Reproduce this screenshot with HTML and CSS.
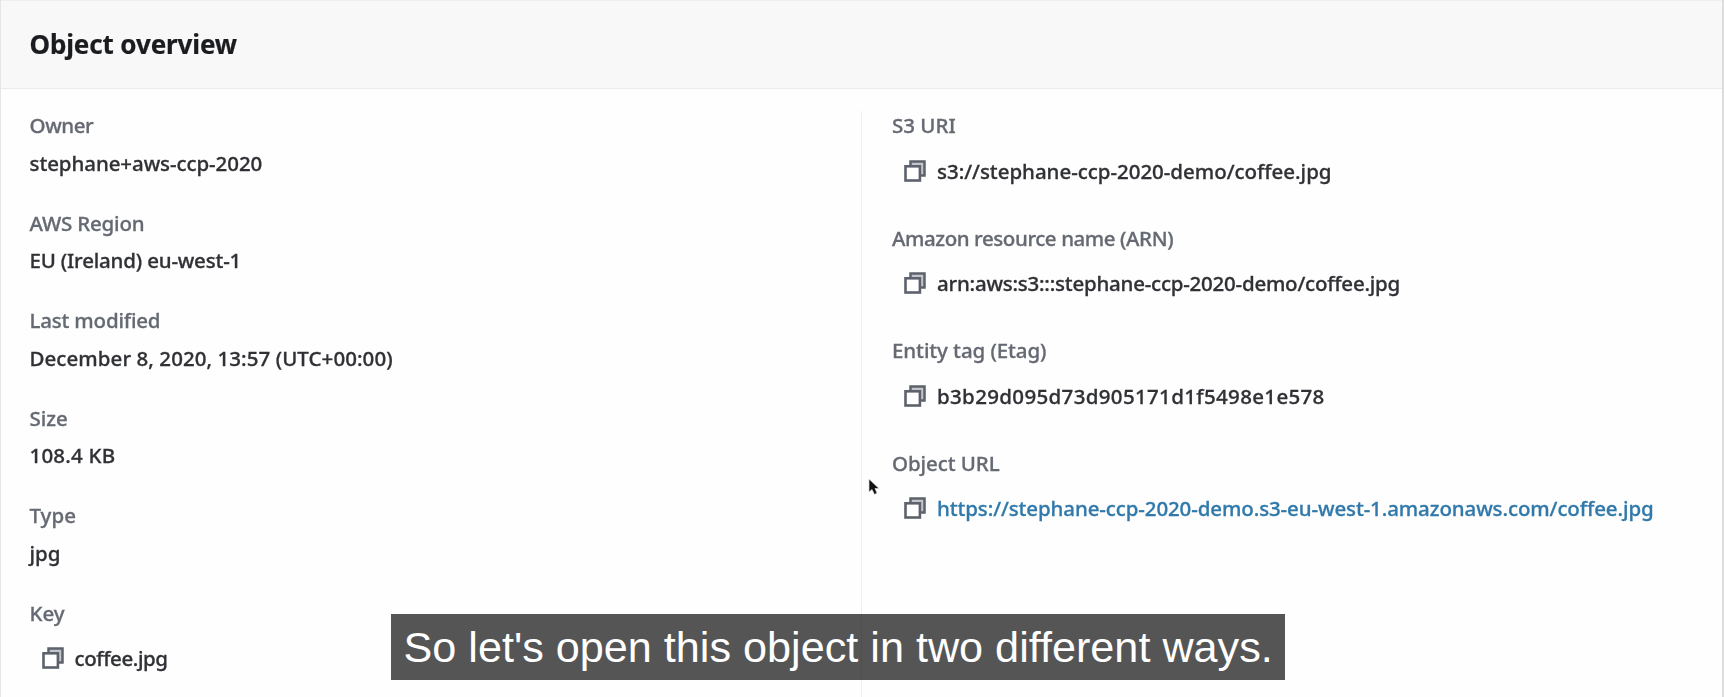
FILE: index.html
```html
<!DOCTYPE html>
<html lang="en">
<head>
<meta charset="utf-8">
<title>Object overview</title>
<link rel="stylesheet" href="styles.css">
</head>
<body>
<svg class="defs" aria-hidden="true">
  <symbol id="copy" viewBox="0 0 22 22">
    <path d="M6.500 5.500V1.500H20.500V15.500H16" fill="#c3c5cb" stroke="#5c616b" stroke-width="2.500"/>
    <rect x="1.500" y="6.300" width="14.400" height="14.200" fill="#fff" stroke="#5c616b" stroke-width="2.600"/>
  </symbol>
</svg>
<main class="panel">
  <header class="head"><h1>Object overview</h1></header>
  <div class="columns">
    <dl class="col left">
      <div class="item"><dt class="tight-l">Owner</dt><dd class="tight-s">stephane+aws-ccp-2020</dd></div>
      <div class="item"><dt class="tight-m">AWS Region</dt><dd class="tight-m">EU (Ireland) eu-west-1</dd></div>
      <div class="item"><dt class="tight-m">Last modified</dt><dd class="loose-s">December 8, 2020, 13:57 (UTC+00:00)</dd></div>
      <div class="item"><dt>Size</dt><dd class="loose-m">108.4 KB</dd></div>
      <div class="item"><dt>Type</dt><dd>jpg</dd></div>
      <div class="item"><dt>Key</dt><dd class="copyable tight-l"><svg class="icon"><use href="#copy"/></svg>coffee.jpg</dd></div>
    </dl>
    <dl class="col right">
      <div class="item"><dt>S3 URI</dt><dd class="copyable tight-xs"><svg class="icon"><use href="#copy"/></svg>s3://stephane-ccp-2020-demo/coffee.jpg</dd></div>
      <div class="item"><dt class="tight-l">Amazon resource name (ARN)</dt><dd class="copyable tight-ml"><svg class="icon"><use href="#copy"/></svg>arn:aws:s3:::stephane-ccp-2020-demo/coffee.jpg</dd></div>
      <div class="item"><dt class="tight-s">Entity tag (Etag)</dt><dd class="copyable loose-l"><svg class="icon"><use href="#copy"/></svg>b3b29d095d73d905171d1f5498e1e578</dd></div>
      <div class="item"><dt class="tight-s">Object URL</dt><dd class="copyable tight-url"><svg class="icon"><use href="#copy"/></svg><a href="#">https://stephane-ccp-2020-demo.s3-eu-west-1.amazonaws.com/coffee.jpg</a></dd></div>
    </dl>
  </div>
</main>
<svg class="cursor" viewBox="0 0 12 18"><path d="M1 1V14L4 11.500L6.500 16.500L9 15L7 10.500H11Z" fill="#111" stroke="#ddd" stroke-width=".7"/></svg>
<p class="caption">So let's open this object in two different ways.</p>
</body>
</html>
```
FILE: styles.css
```css
* { box-sizing: border-box; }
body {
  margin: 0;
  height: 697px;
  overflow: hidden;
  position: relative;
  background: #fefefe;
  font: 500 20.5px/28px "Noto Sans", sans-serif;
  color: #303135;
}
.defs { display: none; }
.panel {
  height: 697px;
  border-left: 1px solid #e6e6e7;
  border-right: 2px solid #dcdcde;
  filter: blur(0.5px);
}
.head {
  height: 89px;
  padding: 25px 28.500px 0;
  background: #f8f8f8;
  border-top: 1px solid #efefef;
  border-bottom: 1px solid #ebebec;
}
h1 {
  margin: 0;
  font-size: 26px;
  line-height: 36px;
  font-weight: 700;
  letter-spacing: -0.13px;
  color: #1b1c20;
  -webkit-text-stroke: 0.2px;
}
.columns {
  display: grid;
  grid-template-columns: 860px 1fr;
  padding-top: 22px;
  height: 608px;
}
.col { margin: 0; display: grid; align-content: start; -webkit-text-stroke: 0.3px; }
.left { padding-left: 28.500px; grid-auto-rows: 97.6px; }
.right { padding-left: 30px; grid-auto-rows: 112.6px; border-left: 1px solid #eeeef0; }
.item { white-space: nowrap; }
dt { color: #656972; }
dd { margin: 9.6px 0 0; }
.copyable { display: flex; align-items: center; padding-left: 12px; margin-top: 17.500px; }
.icon { width: 22px; height: 22px; margin-right: 11px; flex: none; }
a { color: #3079aa; text-decoration: none; }
.tight-xs { letter-spacing: -0.03px; }
.tight-s { letter-spacing: -0.08px; }
.tight-url { letter-spacing: -0.11px; }
.tight-m { letter-spacing: -0.19px; }
.tight-ml { letter-spacing: -0.23px; }
.tight-l { letter-spacing: -0.42px; }
.loose-s { letter-spacing: 0.06px; }
.loose-m { letter-spacing: 0.2px; }
.loose-l { letter-spacing: 0.34px; }
.cursor { position: absolute; left: 867.500px; top: 478px; width: 12px; height: 18px; filter: blur(0.5px); }
.caption {
  position: absolute;
  left: 391px;
  top: 614px;
  width: 894px;
  height: 66px;
  margin: 0;
  padding-left: 12.500px;
  background: rgba(8, 8, 10, 0.69);
  color: #fff;
  font: 43.2px/66px "Liberation Sans", Arial, sans-serif;
  white-space: nowrap;
}
```
